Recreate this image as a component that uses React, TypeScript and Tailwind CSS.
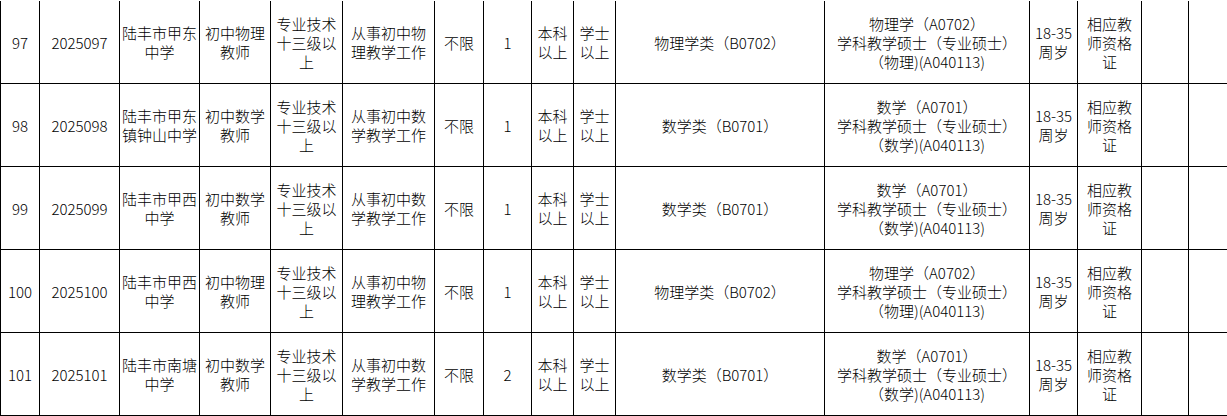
import React from "react";

type Row = {
  no: string;
  code: string;
  unit: string[];
  post: string[];
  job: string[];
  num: string;
  major: string;
  grad: string[];
};

const rows: Row[] = [
  {
    no: "97",
    code: "2025097",
    unit: ["陆丰市甲东", "中学"],
    post: ["初中物理", "教师"],
    job: ["从事初中物", "理教学工作"],
    num: "1",
    major: "物理学类（B0702）",
    grad: ["物理学（A0702）", "学科教学硕士（专业硕士）", "（物理)(A040113)"],
  },
  {
    no: "98",
    code: "2025098",
    unit: ["陆丰市甲东", "镇钟山中学"],
    post: ["初中数学", "教师"],
    job: ["从事初中数", "学教学工作"],
    num: "1",
    major: "数学类（B0701）",
    grad: ["数学（A0701）", "学科教学硕士（专业硕士）", "（数学)(A040113)"],
  },
  {
    no: "99",
    code: "2025099",
    unit: ["陆丰市甲西", "中学"],
    post: ["初中数学", "教师"],
    job: ["从事初中数", "学教学工作"],
    num: "1",
    major: "数学类（B0701）",
    grad: ["数学（A0701）", "学科教学硕士（专业硕士）", "（数学)(A040113)"],
  },
  {
    no: "100",
    code: "2025100",
    unit: ["陆丰市甲西", "中学"],
    post: ["初中物理", "教师"],
    job: ["从事初中物", "理教学工作"],
    num: "1",
    major: "物理学类（B0702）",
    grad: ["物理学（A0702）", "学科教学硕士（专业硕士）", "（物理)(A040113)"],
  },
  {
    no: "101",
    code: "2025101",
    unit: ["陆丰市南塘", "中学"],
    post: ["初中数学", "教师"],
    job: ["从事初中数", "学教学工作"],
    num: "2",
    major: "数学类（B0701）",
    grad: ["数学（A0701）", "学科教学硕士（专业硕士）", "（数学)(A040113)"],
  },
];

function Cell({ lines }: { lines: string[] }) {
  return (
    <div className="flex h-full items-center justify-center border-l border-b border-black text-center whitespace-nowrap overflow-hidden">
      <div>
        {lines.map((l, i) => (
          <div key={i}>{l}</div>
        ))}
      </div>
    </div>
  );
}

export default function App() {
  return (
    <div
      className="w-[1227px] h-[416px] overflow-hidden bg-white pt-px text-black text-[15px] leading-[19px] font-light"
      style={{ fontFamily: '"Noto Sans CJK SC", "Noto Sans", sans-serif' }}
    >
      {rows.map((r) => (
        <div
          key={r.no}
          className="grid h-[83px] grid-cols-[39px_80px_80px_71px_72px_92px_49px_48px_42px_42px_209px_205px_48px_64px_47px_1fr]"
        >
          <Cell lines={[r.no]} />
          <Cell lines={[r.code]} />
          <Cell lines={r.unit} />
          <Cell lines={r.post} />
          <Cell lines={["专业技术", "十三级以", "上"]} />
          <Cell lines={r.job} />
          <Cell lines={["不限"]} />
          <Cell lines={[r.num]} />
          <Cell lines={["本科", "以上"]} />
          <Cell lines={["学士", "以上"]} />
          <Cell lines={[r.major]} />
          <Cell lines={r.grad} />
          <Cell lines={["18-35", "周岁"]} />
          <Cell lines={["相应教", "师资格", "证"]} />
          <Cell lines={[""]} />
          <Cell lines={[""]} />
        </div>
      ))}
    </div>
  );
}
